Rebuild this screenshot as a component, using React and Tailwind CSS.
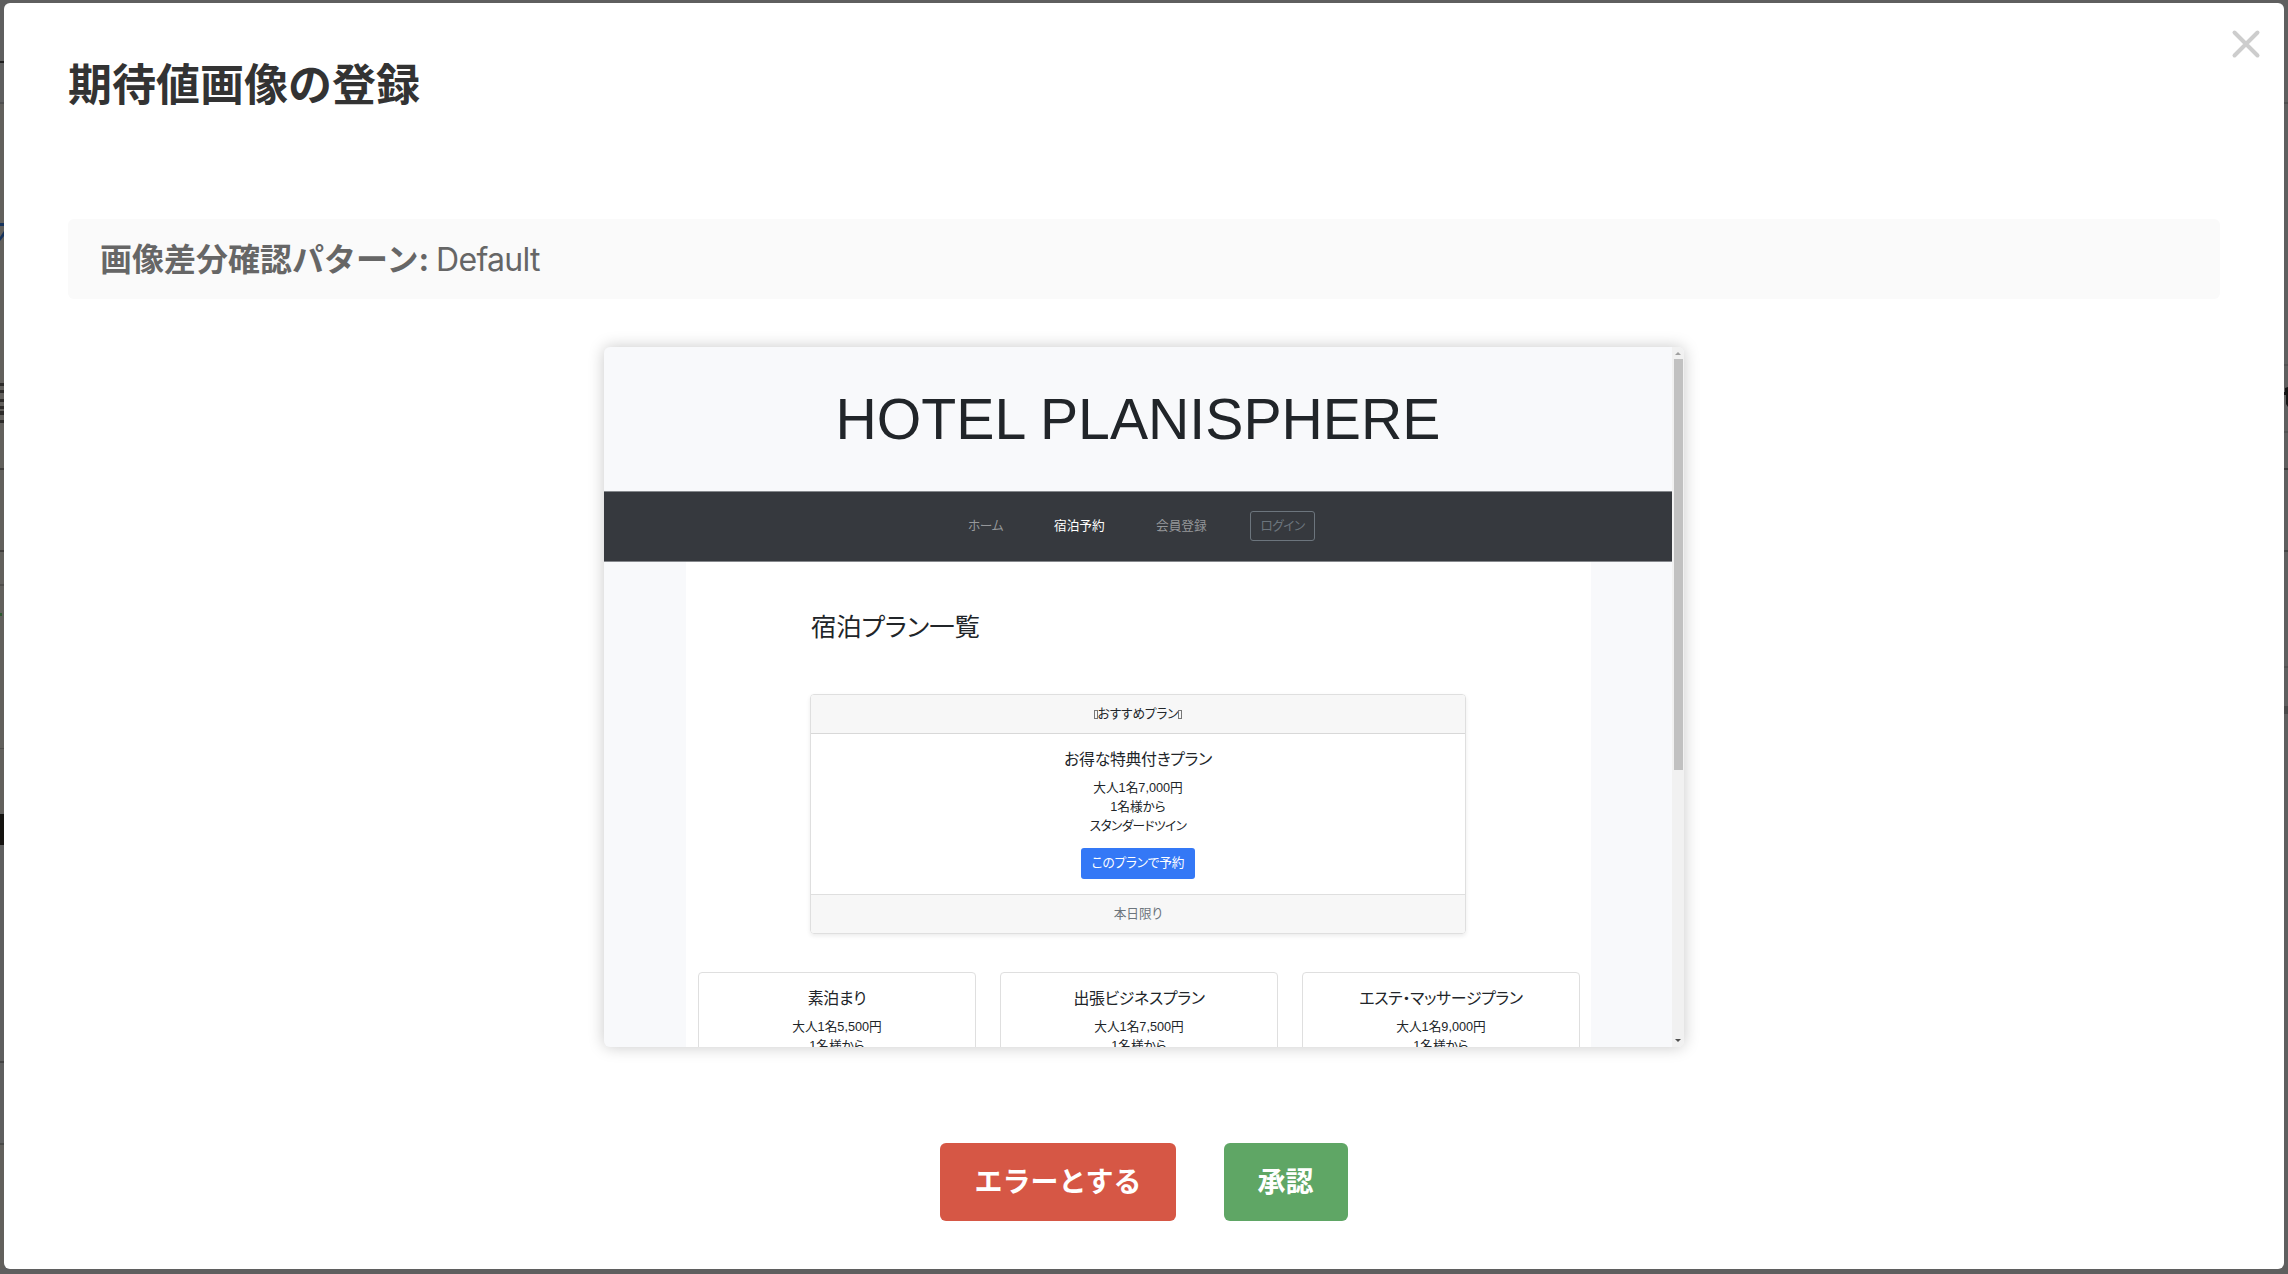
const featured = ['大人1名7,000円', '1名様から']

const plans = [
    { title: '素泊まり', price: '大人1名5,500円' },
    { title: '出張ビジネスプラン', price: '大人1名7,500円' },
    { title: 'エステ・マッサージプラン', price: '大人1名9,000円' },
]

// slivers of the page behind the dialog
const leftMarks = [
    { top: 61, height: 2, color: '#1f1f1f' },
    { top: 102, height: 2, color: '#4f4f4f' },
    { top: 104, height: 709, color: '#62605c' },
    { top: 223, height: 3, color: '#17335c' },
    { top: 383, height: 3, color: '#2d2b29' },
    { top: 390, height: 3, color: '#2d2b29' },
    { top: 399, height: 3, color: '#2d2b29' },
    { top: 406, height: 3, color: '#2d2b29' },
    { top: 411, height: 4, color: '#2d2b29' },
    { top: 420, height: 3, color: '#2d2b29' },
    { top: 468, height: 2, color: '#403e3c' },
    { top: 550, height: 2, color: '#403e3c' },
    { top: 584, height: 2, color: '#504e4b' },
    { top: 748, height: 1, color: '#504e4b' },
    { top: 814, height: 31, color: '#151310' },
    { top: 1061, height: 2, color: '#444444' },
    { top: 1143, height: 2, color: '#4a4a48' },
    { top: 1145, height: 124, color: '#62605c' },
]

const rightMarks = [
    { top: 102, height: 2, color: '#4f4f4f' },
    { top: 364, height: 2, color: '#525252' },
    { top: 431, height: 2, color: '#525252' },
    { top: 468, height: 2, color: '#3c3c3c' },
    { top: 550, height: 2, color: '#444444' },
    { top: 666, height: 2, color: '#525252' },
    { top: 706, height: 8, color: '#4a4a4a' },
]

function Marks({ items }) {
    return items.map((m) => (
        <i key={m.top} className="absolute left-0 w-full" style={{ top: m.top, height: m.height, background: m.color }} />
    ))
}

function Tofu() {
    return <span className="w-[4px] h-[9px] border border-[#777]" />
}

function HotelPage() {
    return (
        <div className="flex w-[1080px] h-[700px] rounded-[6px] overflow-hidden shadow-[0_0_16px_rgba(0,0,0,0.22)] bg-[#f8f9fb] text-[#212529] text-[12.7px] leading-[19px] font-['Liberation_Sans','Noto_Sans_CJK_JP',sans-serif] [font-feature-settings:'palt']">
            <div className="w-[1068px] h-full overflow-hidden">
                <h1 className="h-[144px] pt-[1px] flex items-center justify-center text-[57.2px] leading-none">HOTEL PLANISPHERE</h1>
                <nav className="h-[71px] bg-[#36393e] border-y border-[#85888c] flex items-center text-[#95979a]">
                    <span className="ml-[364px] w-[86px] tracking-[-0.4px]">ホーム</span>
                    <span className="w-[102px] text-white">宿泊予約</span>
                    <span className="w-[94px]">会員登録</span>
                    <span className="w-[65px] h-[30px] mb-px border border-[#6c757d] rounded-[3px] flex items-center justify-center text-[#6c757d] tracking-[-0.5px]">ログイン</span>
                </nav>
                <main className="ml-[82px] w-[905px] h-[490px] bg-white px-[12px]">
                    <h2 className="ml-[113px] pt-[48px] text-[25.4px] leading-[34px] tracking-[-0.1px]">宿泊プラン一覧</h2>
                    <section className="ml-[112px] mt-[50px] w-[656px] h-[240px] border border-[#dfdfdf] rounded-[4px] overflow-hidden shadow-[0_2px_4px_rgba(0,0,0,0.08)] text-center flex flex-col">
                        <div className="h-[39px] bg-[#f7f7f7] border-b border-[#d8d8d8] flex items-center justify-center">
                            <Tofu />
                            <span className="tracking-[-0.1px]">おすすめプラン</span>
                            <Tofu />
                        </div>
                        <div className="flex-1 pt-[16px]">
                            <h5 className="text-[15.9px] leading-[20px] mb-[9px] tracking-[-0.3px]">お得な特典付きプラン</h5>
                            {featured.map((line) => (
                                <p key={line}>{line}</p>
                            ))}
                            <p className="tracking-[-0.6px]">スタンダードツイン</p>
                            <button className="mt-[12px] w-[114px] h-[31px] rounded-[3px] bg-[#3478f6] text-white flex items-center justify-center mx-auto tracking-[-0.2px]">このプランで予約</button>
                        </div>
                        <div className="h-[39px] bg-[#f7f7f7] border-t border-[#dfdfdf] flex items-center justify-center text-[#6c757d]">本日限り</div>
                    </section>
                    <div className="mt-[38px] w-[882px] grid grid-cols-3 gap-[24px]">
                        {plans.map((plan) => (
                            <div key={plan.title} className="h-[180px] border border-[#dfdfdf] rounded-[4px] pt-[16px] text-center">
                                <h5 className="text-[15.9px] leading-[20px] mb-[9px] tracking-[-0.3px]">{plan.title}</h5>
                                <p>{plan.price}</p>
                                <p>1名様から</p>
                            </div>
                        ))}
                    </div>
                </main>
            </div>
            <div className="w-[12px] h-full bg-[#f1f1f1] flex flex-col items-center">
                <svg className="w-[6px] h-[3px] mt-[5px] mb-[4px]" viewBox="0 0 6 3"><path d="M0 3L3 0L6 3Z" fill="#a0a0a0" /></svg>
                <div className="w-[9px] h-[411px] bg-[#c1c1c1]" />
                <svg className="w-[6px] h-[3px] mt-auto mb-[5px]" viewBox="0 0 6 3"><path d="M0 0L3 3L6 0Z" fill="#505050" /></svg>
            </div>
        </div>
    )
}

export default function App() {
    return (
        <div className="relative w-[2288px] h-[1274px] bg-[#5f5f5f] pt-[3px] px-[4px] pb-[5px] overflow-hidden font-['Inter','Noto_Sans_CJK_JP',sans-serif]">
            <div className="absolute left-0 top-0 w-[4px] h-full">
                <Marks items={leftMarks} />
                <svg className="absolute left-0 top-[231px] w-[4px] h-[11px]" viewBox="0 0 4 11"><path d="M4 0V5L0 10V6Z" fill="#17335c" /></svg>
                <i className="absolute left-0 top-[613px] w-[2px] h-[3px] bg-[#2c5a2e]" />
            </div>
            <div className="absolute right-0 top-0 w-[4px] h-full">
                <Marks items={rightMarks} />
                <svg className="absolute left-0 top-[387px] w-[4px] h-[20px]" viewBox="0 0 4 20"><path d="M1 1L4 0V20L2 17V8H0V5H1Z" fill="#151515" /></svg>
            </div>
            <div className="relative w-[2280px] h-[1266px] bg-white rounded-[6px] px-[64px] flex flex-col items-center">
                <button className="absolute right-[23px] top-[26px]" aria-label="close">
                    <svg width="30" height="30" viewBox="0 0 30 30" fill="none" stroke="#cdcdcd" strokeWidth="4" strokeLinecap="round">
                        <path d="M3.5 3.5L26.5 26.5M26.5 3.5L3.5 26.5" />
                    </svg>
                </button>
                <h1 className="self-start mt-[49px] h-[66px] text-[44px] leading-[66px] font-bold text-[#333]">期待値画像の登録</h1>
                <div className="mt-[101px] w-full h-[80px] shrink-0 rounded-[6px] bg-[#fafafa] px-[32px] pt-px flex items-center gap-[7px] text-[32px] text-[#666]">
                    <strong className="font-bold">画像差分確認パターン:</strong>
                    <span className="tracking-[-0.7px]">Default</span>
                </div>
                <div className="mt-[48px]"><HotelPage /></div>
                <div className="mt-[96px] flex gap-[48px] text-[28px] font-bold text-white">
                    <button className="h-[78px] px-[34px] rounded-[6px] bg-[#d65745]">エラーとする</button>
                    <button className="h-[78px] px-[34px] rounded-[6px] bg-[#5fa665]">承認</button>
                </div>
            </div>
        </div>
    )
}
